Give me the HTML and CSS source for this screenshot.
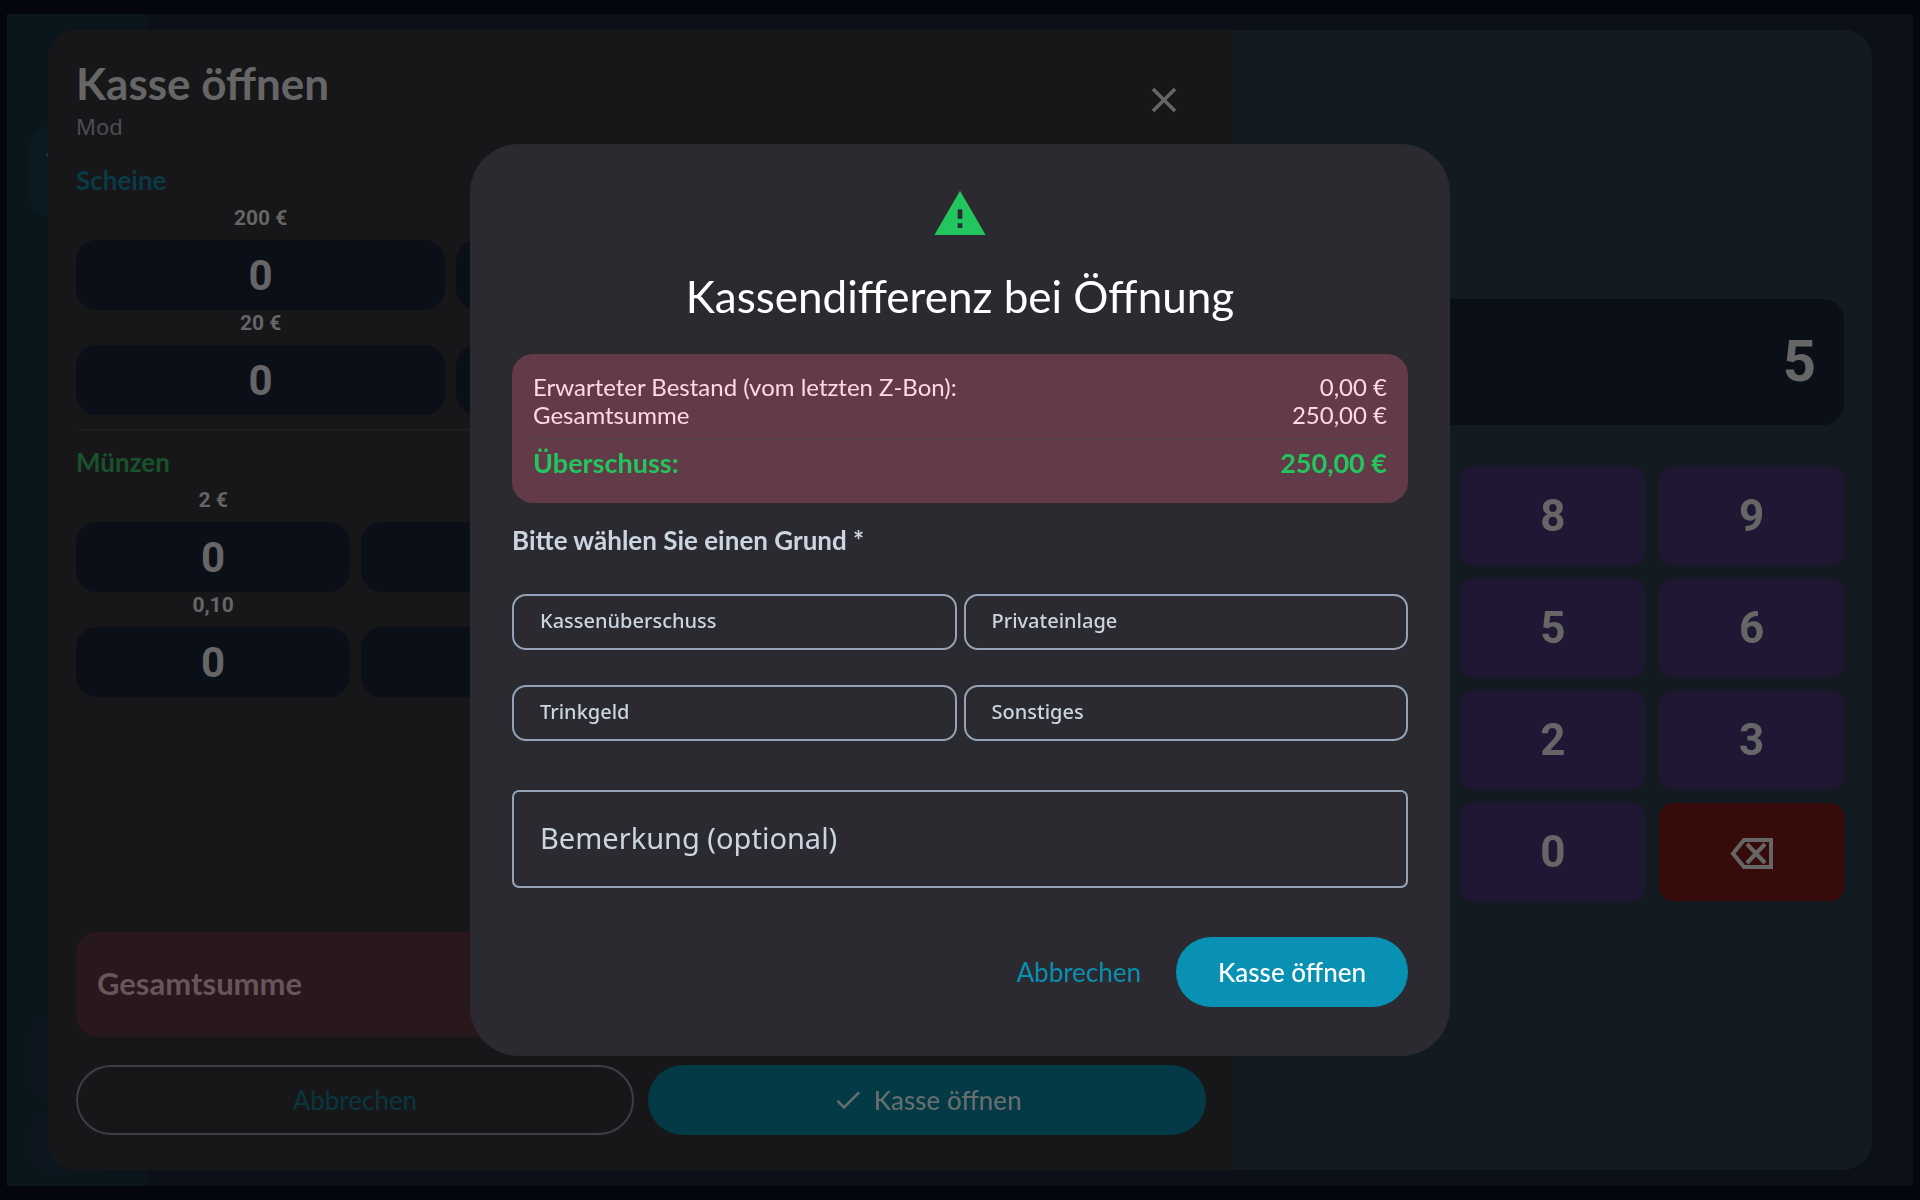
FILE: index.html
```
<!DOCTYPE html>
<html lang="de">
<head>
    <meta charset="UTF-8">
    <title>Kasse öffnen</title>
    <link rel="stylesheet" href="styles.css">
</head>
<body>
    <div class="app">
        <nav class="rail">
            <div class="rail-item active">
                <svg class="rail-icon" viewBox="0 0 64 64"><path d="M2 9L8 2H56L62 9"/></svg>
            </div>
            <div class="rail-spacer"></div>
            <div class="rail-item"></div>
            <div class="rail-item small"></div>
        </nav>
    </div>

    <!-- Cash count sheet -->
    <div class="sheet">
        <div class="count">
            <div class="count-header">
                <div>
                    <h1>Kasse öffnen</h1>
                    <div class="user">Mod</div>
                </div>
                <button class="close" aria-label="Schließen">
                    <svg width="42" height="42" viewBox="0 0 24 24"><path d="M19 6.4L17.6 5 12 10.6 6.4 5 5 6.4 10.6 12 5 17.6 6.4 19 12 13.4 17.6 19 19 17.6 13.4 12z"/></svg>
                </button>
            </div>

            <h2 class="notes-title">Scheine</h2>
            <div class="grid notes">
                <label class="field">200 €<input type="text" value="0"></label>
                <input type="text" aria-label="100 €">
                <input type="text" aria-label="50 €">
                <label class="field">20 €<input type="text" value="0"></label>
                <input type="text" aria-label="10 €">
                <input type="text" aria-label="5 €">
            </div>

            <hr>

            <h2 class="coins-title">Münzen</h2>
            <div class="grid coins">
                <label class="field">2 €<input type="text" value="0"></label>
                <input type="text" aria-label="1 €">
                <input type="text" aria-label="0,50">
                <input type="text" aria-label="0,20">
                <label class="field">0,10<input type="text" value="0"></label>
                <input type="text" aria-label="0,05">
                <input type="text" aria-label="0,02">
                <input type="text" aria-label="0,01">
            </div>

            <div class="total">Gesamtsumme</div>

            <div class="count-actions">
                <button class="btn outlined">Abbrechen</button>
                <button class="btn filled">
                    <svg width="32" height="32" viewBox="0 0 24 24"><path d="M9 16.2L4.8 12l-1.4 1.4L9 19 21 7l-1.4-1.4z"/></svg>
                    Kasse öffnen
                </button>
            </div>
        </div>

        <div class="pad">
            <div class="display">5</div>
            <div class="keys">
                <button>7</button>
                <button>8</button>
                <button>9</button>
                <button>4</button>
                <button>5</button>
                <button>6</button>
                <button>1</button>
                <button>2</button>
                <button>3</button>
                <button>C</button>
                <button>0</button>
                <button class="delete" aria-label="Löschen">
                    <svg width="43" height="31" viewBox="0 0 43 31"><path d="M14 2H41V29H14L3 15.5zM17 6L35 25M35 6L17 25"/></svg>
                </button>
            </div>
        </div>
    </div>

    <!-- Difference dialog -->
    <div class="overlay">
        <div class="dialog" role="dialog" aria-labelledby="dialog-title">
            <svg class="warning" width="56" height="56" viewBox="0 0 24 24"><path d="M1 21h22L12 2 1 21zm12-3h-2v-2h2v2zm0-4h-2v-4h2v4z"/></svg>
            <h2 class="dialog-title" id="dialog-title">Kassendifferenz bei Öffnung</h2>

            <div class="summary">
                <div class="row"><span>Erwarteter Bestand (vom letzten Z-Bon):</span><span>0,00 €</span></div>
                <div class="row"><span>Gesamtsumme</span><span>250,00 €</span></div>
                <div class="row surplus"><span>Überschuss:</span><span>250,00 €</span></div>
            </div>

            <div class="reason-title">Bitte wählen Sie einen Grund *</div>
            <div class="reasons">
                <button>Kassenüberschuss</button>
                <button>Privateinlage</button>
                <button>Trinkgeld</button>
                <button>Sonstiges</button>
            </div>

            <input class="remark" type="text" placeholder="Bemerkung (optional)" aria-label="Bemerkung (optional)">

            <div class="dialog-actions">
                <button class="btn text">Abbrechen</button>
                <button class="btn primary">Kasse öffnen</button>
            </div>
        </div>
    </div>
</body>
</html>
```
FILE: styles.css
```
* {
    box-sizing: border-box;
}
body {
    margin: 0;
    height: 100vh;
    padding: 14px 7px;
    background: #04060f;
    font-family: Lato, "Noto Sans", sans-serif;
    overflow: hidden;
}
h1, h2 {
    margin: 0;
}
button, input {
    font-family: inherit;
    border: none;
    margin: 0;
    padding: 0;
}
button {
    cursor: pointer;
}
.app {
    height: 100%;
    background: #0c1018;
}
.rail {
    display: flex;
    flex-direction: column;
    gap: 12px;
    width: 140px;
    height: 100%;
    padding: 112px 21px 13px;
    background: #0b151c;
}
.rail-item {
    height: 84px;
    border-radius: 24px;
    background: #0d161e;
}
.rail-item.active {
    height: 91px;
    padding: 21px 17px;
    background: #0a1a21;
}
.rail-item.small {
    height: 60px;
}
.rail-icon {
    width: 64px;
    height: 64px;
    fill: none;
    stroke: #08414d;
    stroke-width: 3;
}
.rail-spacer {
    flex: 1;
}

/* sheet */
.sheet {
    position: fixed;
    inset: 30px 48px;
    display: flex;
    border-radius: 28px;
    overflow: hidden;
    background: #131a21;
}
.count {
    flex: 0 0 65%;
    display: flex;
    flex-direction: column;
    padding: 28px 28px 35px;
    background: #171719;
    color: #666667;
}
.count-header {
    display: flex;
    justify-content: space-between;
    height: 88px;
    margin-bottom: 16px;
}
.count-header h1 {
    font-size: 44px;
    line-height: 50px;
}
.user {
    font-family: "Noto Sans", sans-serif;
    font-size: 22px;
    line-height: 36px;
    color: #4d4d52;
}
.close {
    width: 84px;
    height: 84px;
    background: none;
}
.close svg {
    display: block;
    margin: auto;
    fill: #666667;
}
.count h2 {
    margin-bottom: 7px;
    font-size: 26px;
    line-height: 36px;
}
.notes-title {
    color: #093a45;
}
.coins-title {
    color: #17522c;
}
.grid {
    display: grid;
    column-gap: 11px;
    align-items: end;
}
.notes {
    grid-template-columns: repeat(3, 1fr);
}
.coins {
    grid-template-columns: repeat(4, 1fr);
}
.field {
    font-family: Roboto, sans-serif;
    font-size: 21px;
    font-weight: bold;
    line-height: 27px;
    text-align: center;
}
.grid input {
    display: block;
    width: 100%;
    height: 70px;
    border-radius: 21px;
    background: #0b1018;
    color: #666667;
    font-size: 42px;
    font-weight: bold;
    text-align: center;
}
.field input {
    margin-top: 8px;
}
hr {
    width: 100%;
    height: 2px;
    margin: 14px 0 13px;
    border: none;
    background: #1d1d1f;
}
.total {
    display: flex;
    align-items: center;
    height: 105px;
    margin-top: auto;
    padding: 0 21px 4px;
    border-radius: 21px;
    background: #28171c;
    color: #66555a;
    font-size: 31px;
    font-weight: bold;
}
.count-actions {
    display: grid;
    grid-template-columns: 1fr 1fr;
    gap: 14px;
    margin-top: 28px;
}
.btn {
    height: 70px;
    border-radius: 35px;
    font-size: 26px;
}
.outlined {
    border: 2px solid #3b4047;
    background: none;
    color: #09363f;
}
.filled {
    display: flex;
    justify-content: center;
    align-items: center;
    gap: 10px;
    background: #033a46;
    color: #666d6e;
    font-weight: 500;
}
.filled svg {
    fill: #666d6e;
}

/* number pad */
.pad {
    flex: 1;
    display: flex;
    flex-direction: column;
    justify-content: center;
    gap: 42px;
    padding: 28px;
    font-family: Roboto, sans-serif;
}
.display {
    height: 126px;
    padding: 0 28px;
    border-radius: 21px;
    background: #0b0f17;
    color: #666667;
    font-size: 58px;
    font-weight: bold;
    line-height: 124px;
    text-align: right;
}
.keys {
    display: grid;
    grid-template-columns: repeat(3, 1fr);
    gap: 14px;
}
.keys button {
    height: 98px;
    border-radius: 14px;
    background: #201735;
    color: #666667;
    font-size: 44px;
    font-weight: bold;
}
.keys .delete {
    padding-top: 4px;
    background: #370b0a;
}
.delete svg {
    fill: none;
    stroke: #666667;
    stroke-width: 4;
}

/* dialog */
.overlay {
    position: fixed;
    inset: 0;
    display: flex;
    justify-content: center;
    align-items: center;
}
.dialog {
    width: 980px;
    padding: 42px 42px 49px;
    border-radius: 49px;
    background: #2b2a30;
    color: #cbd5e1;
}
.warning {
    display: block;
    margin: 0 auto 26px;
    fill: #22c55e;
}
.dialog-title {
    color: #fff;
    font-size: 44px;
    font-weight: normal;
    line-height: 56px;
    text-align: center;
}
.summary {
    margin-top: 30px;
    padding: 19px 21px 24px;
    border-radius: 21px;
    background: #633b48;
    color: #ffd8e4;
    font-size: 24px;
    line-height: 28px;
}
.row {
    display: flex;
    justify-content: space-between;
}
.surplus {
    margin-top: 9px;
    padding-top: 7px;
    border-top: 2px solid #5a424d;
    color: #22c55e;
    font-size: 27px;
    font-weight: bold;
    line-height: 32px;
}
.reason-title {
    margin: 20px 0 36px;
    font-size: 26px;
    font-weight: bold;
    line-height: 35px;
}
.reasons {
    display: grid;
    grid-template-columns: 1fr 1fr;
    gap: 35px 7px;
}
.reasons button {
    height: 56px;
    padding: 0 26px 4px;
    border: 2px solid #94a3b8;
    border-radius: 14px;
    background: none;
    color: #cbd5e1;
    font-family: "Noto Sans", sans-serif;
    font-size: 20px;
    font-weight: 500;
    text-align: left;
}
.remark {
    display: block;
    width: 100%;
    height: 98px;
    margin: 49px 0;
    padding: 0 26px 4px;
    border: 2px solid #94a3b8;
    border-radius: 7px;
    background: none;
    color: #cbd5e1;
    font-family: "Noto Sans", sans-serif;
    font-size: 29px;
}
.remark::placeholder {
    color: #cbd5e1;
}
.dialog-actions {
    display: flex;
    justify-content: flex-end;
    gap: 14px;
}
.text {
    padding: 0 21px;
    background: none;
    color: #0891b2;
}
.primary {
    padding: 0 42px;
    background: #0891b2;
    color: #fff;
    font-weight: 500;
}
```
